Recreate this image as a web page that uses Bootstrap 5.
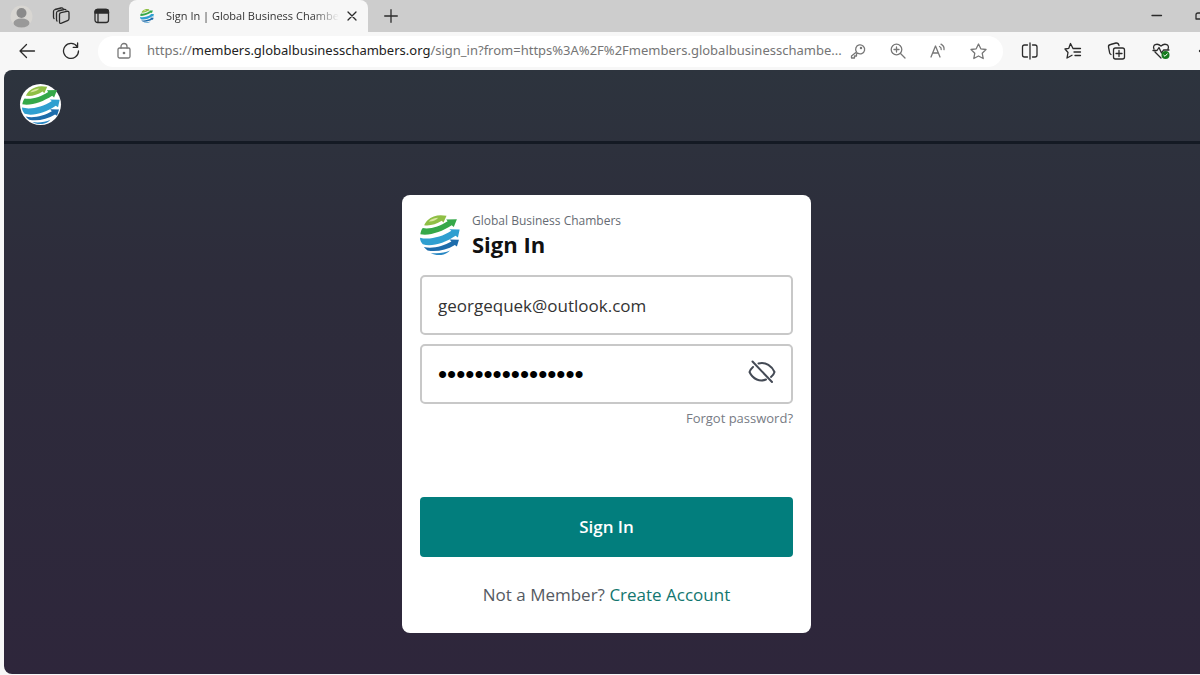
<!DOCTYPE html>
<html lang="en">
<head>
<meta charset="utf-8">
<meta name="viewport" content="width=device-width, initial-scale=1">
<title>Sign In | Global Business Chambers</title>
<link href="https://cdn.jsdelivr.net/npm/bootstrap@5.3.0/dist/css/bootstrap.min.css" rel="stylesheet">
<style>
  body { font-family: "Open Sans", "Noto Sans", sans-serif; background: #f7f7f7; color: #333; }
  svg { display: block; flex: none; }
  .stroke-icon { fill: none; stroke: currentColor; stroke-width: 1.3; stroke-linecap: round; stroke-linejoin: round; }
  .bare { border: 0; background: none; padding: 0; color: #2b2b2b; flex: none; }
  .window-shell { min-height: 100vh; }

  .tab-strip { height: 32px; background: #cdcdcd; padding-left: 10px; }
  .strip-tools { width: 119px; gap: 19px; }
  .page-tab { width: 239px; height: 32px; background: #f7f7f7; border-radius: 8px 8px 0 0; padding: 0 10px 0 11px; font-size: 11px; }
  .tab-title { color: #333; -webkit-mask-image: linear-gradient(90deg, #000 85%, transparent); mask-image: linear-gradient(90deg, #000 85%, transparent); }

  .tool-row { height: 38px; padding-left: 18px; }
  .nav-tools { gap: 26px; }
  .address-bar { height: 31px; background: #fff; border-radius: 16px; margin-left: 18px; padding: 0 16px 0 18px; }
  .address-bar .bare { color: #777; }
  .address-text { font-family: "Noto Sans", "Open Sans", sans-serif; font-size: 13px; color: #757575; text-decoration: none; margin-left: 15px; }
  .address-text b { font-weight: 400; color: #222; }
  .tool-icons { gap: 25px; margin-left: 18px; }

  .site { margin-left: 4px; margin-bottom: 1px; border-radius: 8px 0 0 8px; background: linear-gradient(#2d343e, #2d2c3b 35%, #2e263b); }
  .site-head { height: 74px; border-bottom: 3px solid #141a24; padding: 14px 16px; }
  .logo-disc { width: 41px; height: 41px; background: #fff; }
  .site-main { padding: 51px 0 41px 9px; }

  .sign-card { width: 409px; border: 0; border-radius: 8px; padding: 17px 18px 24px; }
  .org-name { font-size: 12px; line-height: 18px; color: #666b73; }
  .card-heading { font-size: 22px; line-height: 28px; font-weight: 700; color: #111; }
  .field-stack { gap: 9px; margin-top: 17px; }
  .field { height: 60px; border: 2px solid #c8c8c8; border-radius: 5px; padding: 0 16px; font-size: 17px; color: #333; }
  .secret { font-family: "Liberation Sans", Arial, sans-serif; font-size: 26px; color: #000; }
  .eye-toggle { position: absolute; right: 17px; top: 14px; color: #444a55; }
  .forgot { font-size: 13px; line-height: 20px; color: #777b84; text-decoration: none; }
  .btn-teal { height: 60px; margin-top: 69px; border: 0; border-radius: 4px; font-size: 17px; font-weight: 600; --bs-btn-color: #fff; --bs-btn-bg: #027e7d; --bs-btn-hover-color: #fff; --bs-btn-hover-bg: #026b6a; }
  .join { font-size: 17px; line-height: 28px; margin-top: 24px; color: #555a62; }
  .join a { color: #12766f; text-decoration: none; }
</style>
</head>
<body>
<svg width="0" height="0" class="position-absolute" aria-hidden="true">
  <symbol id="globe" viewBox="0 0 116 116">
    <path fill="#8fbf45" d="M22 15C32 6 47 1 60 1L77 2 68 22 63 17C46 28 30 32 12 30C15 23 18 19 22 15Z"/>
    <path fill="#d9e6a0" d="M25 19C33 11 42 9 53 8C47 15 36 20 25 19Z"/>
    <path fill="#35a849" d="M8 38C30 42 57 33 80 18L76 13L107 12L98 35L92 30C63 49 28 61 1 56C2 49 4 43 8 38Z"/>
    <path fill="#2f9fd0" d="M0 66C25 73 62 65 91 46L85 41L115 42L110 65L103 60C72 81 34 93 8 85C3 79 0 73 0 66Z"/>
    <path fill="#1d6cab" d="M11 93C36 99 67 91 91 77L86 71L113 72L107 91L101 87C77 102 46 108 22 103C18 100 14 97 11 93Z"/>
    <path fill="#2988c4" d="M31 110C53 113 70 110 87 103C72 119 48 120 31 110Z"/>
  </symbol>
</svg>
<div class="window-shell d-flex flex-column overflow-hidden">
  <header>
    <div class="tab-strip d-flex align-items-center">
      <div class="strip-tools d-flex align-items-center">
        <button class="bare" aria-label="Profile"><svg width="23" height="23" viewBox="0 0 23 23"><circle cx="11.500" cy="11.500" r="11" fill="#d8d6d2"/><circle cx="11.500" cy="8" r="5" fill="#8a8a8a"/><ellipse cx="11.500" cy="18" rx="8" ry="4.500" fill="#999"/></svg></button>
        <button class="bare" aria-label="Workspaces"><svg class="stroke-icon" width="19" height="19" viewBox="0 0 19 19"><path d="M7.500 7.500Q7.500 6 9 5.700L15 4.300Q17 4 17 6V11.500Q17 13 15.500 13.600L9.500 16.200Q7.500 17 7.500 15ZM5 14Q4.500 13.500 4.500 12.500V6Q4.500 4.500 6 4L12 2.500Q13.500 2.200 14 3M2 11.500Q1.500 11 1.500 10V4.500Q1.500 3 3 2.500L9 1Q10.500.7 11 1.500"/></svg></button>
        <button class="bare ms-1" aria-label="Tab actions"><svg class="stroke-icon" width="16" height="16" viewBox="0 0 16 16"><rect x="1" y="1.500" width="13.500" height="13" rx="2.500"/><path fill="currentColor" d="M1 5V4Q1 1.500 3.500 1.500H12Q14.500 1.500 14.500 4V5ZM4 5V14"/></svg></button>
      </div>
      <div class="page-tab d-flex align-items-center">
        <svg width="14" height="14" aria-hidden="true"><use href="#globe"/></svg>
        <span class="tab-title text-nowrap ms-2 ps-1 me-auto">Sign In | Global Business Chambe</span>
        <button class="bare" aria-label="Close tab"><svg class="stroke-icon" width="12" height="12" viewBox="0 0 12 12"><path d="M2 2L10 10M10 2L2 10"/></svg></button>
      </div>
      <button class="bare ms-3" aria-label="New tab"><svg class="stroke-icon" width="14" height="14" viewBox="0 0 14 14"><path d="M7 .7V13.300M.7 7H13.300"/></svg></button>
      <button class="bare ms-auto" aria-label="Minimize"><svg class="stroke-icon" width="12" height="12" viewBox="0 0 12 12"><path d="M1 5.500H10.500"/></svg></button>
      <button class="bare ms-4" aria-label="Maximize"><svg class="stroke-icon ms-2" width="5" height="12" viewBox="0 0 5 12"><path d="M7 3H3Q1 3 1 5V9H7"/></svg></button>
    </div>
    <div class="tool-row d-flex align-items-center">
      <div class="nav-tools d-flex align-items-center">
        <button class="bare" aria-label="Back"><svg class="stroke-icon" width="18" height="18" viewBox="0 0 18 18"><path d="M16.500 9H2M8.500 2.500L2 9L8.500 15.500"/></svg></button>
        <button class="bare" aria-label="Refresh"><svg class="stroke-icon" width="18" height="18" viewBox="0 0 18 18"><path d="M15.200 4.700A7.500 7.500 0 1 0 16.500 9M15.600 1V5.300H11.200"/></svg></button>
      </div>
      <div class="address-bar d-flex align-items-center flex-grow-1 overflow-hidden">
        <button class="bare" aria-label="Site information"><svg class="stroke-icon" width="16" height="18" viewBox="0 0 16 18"><rect x="2" y="6" width="12" height="10" rx="1.500"/><path d="M5 6V4.500A3 3 0 0 1 11 4.500V6"/><circle cx="8" cy="11" r=".7" fill="currentColor"/></svg></button>
        <a href="#" class="address-text text-nowrap flex-grow-1">https://<b>members.globalbusinesschambers.org</b>/sign_in?from=https%3A%2F%2Fmembers.globalbusinesschambe...</a>
        <div class="d-flex align-items-center gap-4 ms-2">
          <button class="bare" aria-label="Passwords"><svg class="stroke-icon" width="16" height="16" viewBox="0 0 16 16"><path d="M6.500 9L1.500 13V15H4.500V13H6.500V11L7.500 10A4.500 4.500 0 1 0 6.500 9"/><circle cx="11" cy="5" r=".6"/></svg></button>
          <button class="bare" aria-label="Zoom"><svg class="stroke-icon" width="16" height="16" viewBox="0 0 16 16"><circle cx="6.500" cy="6.500" r="5.300"/><path d="M10.500 10.500L15 15M6.500 4V9M4 6.500H9"/></svg></button>
          <button class="bare" aria-label="Read aloud"><svg class="stroke-icon" width="16" height="16" viewBox="0 0 16 16"><path d="M1 14L5.500 3L10 14M2.700 10H8.300M9.500 3.500Q11.500 4.500 11.200 6.500M11 1.200Q14.500 3 14 6.700"/></svg></button>
          <button class="bare" aria-label="Favorite"><svg class="stroke-icon" width="17" height="17" viewBox="0 0 17 17"><path d="M8.500 1L10.800 5.800L16 6.500L12.200 10.200L13.200 15.500L8.500 13L3.800 15.500L4.800 10.200L1 6.500L6.200 5.800Z"/></svg></button>
        </div>
      </div>
      <div class="tool-icons d-flex align-items-center">
        <button class="bare" aria-label="Split screen"><svg class="stroke-icon" width="18" height="18" viewBox="0 0 18 18"><path d="M6.500 3H3.500Q1.500 3 1.500 5V13Q1.500 15 3.500 15H6.500M11.500 3H14Q16 3 16 5V13Q16 15 14 15H11.500M9 1V17"/></svg></button>
        <button class="bare" aria-label="Favorites list"><svg class="stroke-icon" width="18" height="18" viewBox="0 0 18 18"><path d="M9 6.500L6.500 1.500L4.800 6.300L1 7L4 10.500L3 16L8 13.300M9 6.500H16.500M10 10H16.500M11 13.500H16.500"/></svg></button>
        <button class="bare" aria-label="Collections"><svg class="stroke-icon" width="20" height="18" viewBox="0 0 20 18"><rect x="6.500" y="6" width="11" height="11" rx="2"/><path d="M12 8.500V14.500M9 11.500H15M4 12.500Q3 12 2.700 11L1.500 5Q1.200 3 3.500 2.500L9 1Q11.500.8 12 3.500"/></svg></button>
        <button class="bare" aria-label="Browser essentials"><svg class="stroke-icon" width="20" height="18" viewBox="0 0 20 18"><path d="M2 7C0 3 5 .5 9 4C13 .5 18 3 16 7M3 10L9 16M1 8.500H5L7 5.500L9.500 11L11.500 8H17"/><circle cx="13.500" cy="13" r="4" fill="#147a1d" stroke="none"/><path stroke="#fff" stroke-width="1" d="M11.800 13.200L13 14.300L15.300 11.800"/></svg></button>
        <button class="bare" aria-label="More"><svg width="3" height="4" viewBox="0 0 3 4"><circle cx="3" cy="2" r="1.200" fill="#333"/></svg></button>
      </div>
    </div>
  </header>

  <div class="site flex-grow-1">
    <div class="site-head">
      <a href="#" class="logo-disc rounded-circle d-flex align-items-center justify-content-center" aria-label="Global Business Chambers home"><svg width="38" height="38"><use href="#globe"/></svg></a>
    </div>
    <main class="site-main d-flex justify-content-center">
      <form class="card sign-card">
        <div class="d-flex align-items-center">
          <svg width="40" height="40" aria-hidden="true"><use href="#globe"/></svg>
          <div class="ms-2 ps-1">
            <div class="org-name">Global Business Chambers</div>
            <h1 class="card-heading mb-0">Sign In</h1>
          </div>
        </div>
        <div class="field-stack d-flex flex-column">
          <input class="field w-100" id="email" type="email" aria-label="Email" value="georgequek@outlook.com">
          <div class="position-relative">
            <input class="field secret w-100 d-block" id="password" type="password" aria-label="Password" value="abcdefghijklmnop">
            <button class="bare eye-toggle" type="button" aria-label="Show password"><svg class="stroke-icon" width="28" height="28" viewBox="0 0 28 28"><path style="stroke-width:2" d="M4.500 3.500L24 24M10.500 5.500C18 3.500 24 8.500 26.500 14C26 16 24.500 17.800 23 19M5 9C3.500 10.300 2.300 12 1.500 14C5 21.500 12 24 18 21.500"/></svg></button>
          </div>
        </div>
        <a href="#" class="forgot align-self-end mt-1">Forgot password?</a>
        <button class="btn btn-teal w-100" type="submit">Sign In</button>
        <p class="join text-center mb-0">Not a Member? <a href="#">Create Account</a></p>
      </form>
    </main>
  </div>
</div>
<script src="https://cdn.jsdelivr.net/npm/bootstrap@5.3.0/dist/js/bootstrap.bundle.min.js"></script>
</body>
</html>
